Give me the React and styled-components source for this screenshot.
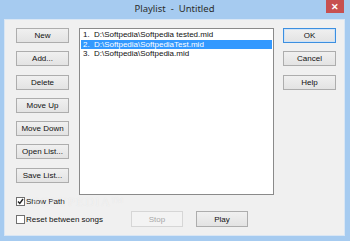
import React from 'react';
import styled, { createGlobalStyle } from 'styled-components';

const GlobalStyle = createGlobalStyle`
  html, body {
    margin: 0;
    padding: 0;
    background: #a6cbf0;
  }
  body {
    font-family: 'Liberation Sans', Arial, sans-serif;
  }
`;

const Frame = styled.div`
  position: relative;
  width: 350px;
  height: 241px;
  box-sizing: border-box;
  background: #a6cbf0;
  padding: 0 5px 5px 4px;
  display: flex;
  flex-direction: column;
`;

const TitleBar = styled.div`
  height: 19px;
  display: flex;
  align-items: center;
  justify-content: center;
  font-family: 'Noto Sans', 'Liberation Sans', sans-serif;
  font-size: 9.5px;
  color: #2b2b2b;
  white-space: pre;
  padding-bottom: 2px;
  box-sizing: border-box;
`;

const CloseButton = styled.div`
  position: absolute;
  top: 0;
  right: 6px;
  width: 18px;
  height: 13px;
  background: #c75050;
  color: #fff;
  font-size: 9px;
  font-weight: bold;
  display: flex;
  align-items: center;
  justify-content: center;
`;

const Client = styled.div`
  flex: 1;
  background: #f0f0f0;
  border: 1px solid #d9e6f4;
  box-sizing: border-box;
  padding: 8px 8px 0 11px;
  display: flex;
  flex-direction: column;
`;

const Main = styled.div`
  display: flex;
  align-items: flex-start;
  height: 167px;
`;

const ButtonColumn = styled.div`
  display: flex;
  flex-direction: column;
  gap: 8.3px;
`;

const Button = styled.button`
  width: ${(p) => p.$w || 53}px;
  height: ${(p) => p.$h || 15}px;
  padding: 0;
  box-sizing: border-box;
  font-family: 'Liberation Sans', Arial, sans-serif;
  font-size: 8px;
  color: ${(p) => (p.disabled ? '#a8a8a8' : '#111')};
  background: ${(p) =>
    p.disabled ? '#f3f3f3' : 'linear-gradient(#f0f0f0, #e3e3e3)'};
  border: 1px solid
    ${(p) => (p.$default ? '#3c8fe0' : p.disabled ? '#d6d6d6' : '#adadad')};
  box-shadow: ${(p) => (p.$default ? 'inset 0 0 0 1px #cfe3f7' : 'none')};
  border-radius: 0;
  display: flex;
  align-items: center;
  justify-content: center;
`;

const List = styled.div`
  width: 195px;
  height: 167px;
  flex-shrink: 0;
  box-sizing: border-box;
  background: #fff;
  border: 1px solid #8a8a8a;
  padding: 1px;
  margin-left: 10px;
  margin-right: 9px;
  font-size: 8px;
`;

const Item = styled.div`
  height: 9.5px;
  display: flex;
  align-items: center;
  padding-left: 2px;
  white-space: pre;
  color: ${(p) => (p.$selected ? '#fff' : '#111')};
  background: ${(p) => (p.$selected ? '#3399ff' : 'transparent')};
`;

const Num = styled.span`
  width: 11px;
`;

const Bottom = styled.div`
  display: flex;
  flex-direction: column;
  gap: 4px;
`;

const Row = styled.div`
  display: flex;
  align-items: center;
  height: 16px;
`;

const Check = styled.label`
  display: flex;
  align-items: center;
  gap: 1px;
  font-size: 8px;
  color: #111;
  height: 12px;
  width: ${(p) => (p.$w ? `${p.$w}px` : 'auto')};
  flex-shrink: 0;
`;

const Box = styled.span`
  width: 9px;
  height: 9px;
  box-sizing: border-box;
  border: 1px solid #707070;
  background: #fff;
  display: flex;
  align-items: center;
  justify-content: center;
`;

const BottomButtons = styled.div`
  display: flex;
  gap: 13px;
`;

const Watermark = styled.div`
  position: absolute;
  left: 32px;
  top: 194px;
  font-family: 'Liberation Serif', serif;
  font-size: 13px;
  letter-spacing: 1px;
  color: rgba(255, 255, 255, 0.45);
  text-shadow: 0 0 1px rgba(170, 170, 170, 0.2);
  pointer-events: none;
`;

const leftButtons = ['New', 'Add...', 'Delete', 'Move Up', 'Move Down', 'Open List...', 'Save List...'];
const songs = [
  'D:\\Softpedia\\Softpedia tested.mid',
  'D:\\Softpedia\\SoftpediaTest.mid',
  'D:\\Softpedia\\Softpedia.mid',
];

function CheckBox({ checked, width, children }) {
  return (
    <Check $w={width}>
      <Box>
        {checked && (
          <svg width="7" height="7" viewBox="0 0 7 7">
            <path d="M1 3.5 L2.8 5.5 L6 1" stroke="#222" strokeWidth="1.4" fill="none" />
          </svg>
        )}
      </Box>
      {children}
    </Check>
  );
}

export default function App() {
  return (
    <>
      <GlobalStyle />
      <Frame>
        <TitleBar>{'Playlist  -  Untitled'}</TitleBar>
        <CloseButton>✕</CloseButton>
        <Client>
          <Main>
            <ButtonColumn>
              {leftButtons.map((b) => (
                <Button key={b} type="button">{b}</Button>
              ))}
            </ButtonColumn>
            <List>
              {songs.map((s, i) => (
                <Item key={s} $selected={i === 1}>
                  <Num>{i + 1}.</Num>
                  {s}
                </Item>
              ))}
            </List>
            <ButtonColumn>
              <Button type="button" $default>OK</Button>
              <Button type="button">Cancel</Button>
              <Button type="button">Help</Button>
            </ButtonColumn>
          </Main>
          <Bottom>
            <CheckBox checked>Show Path</CheckBox>
            <Row>
              <CheckBox width={115}>Reset between songs</CheckBox>
              <BottomButtons>
                <Button type="button" disabled $w={52} $h={16}>Stop</Button>
                <Button type="button" $w={52} $h={16}>Play</Button>
              </BottomButtons>
            </Row>
          </Bottom>
        </Client>
        <Watermark>SOFTPEDIA™</Watermark>
      </Frame>
    </>
  );
}
